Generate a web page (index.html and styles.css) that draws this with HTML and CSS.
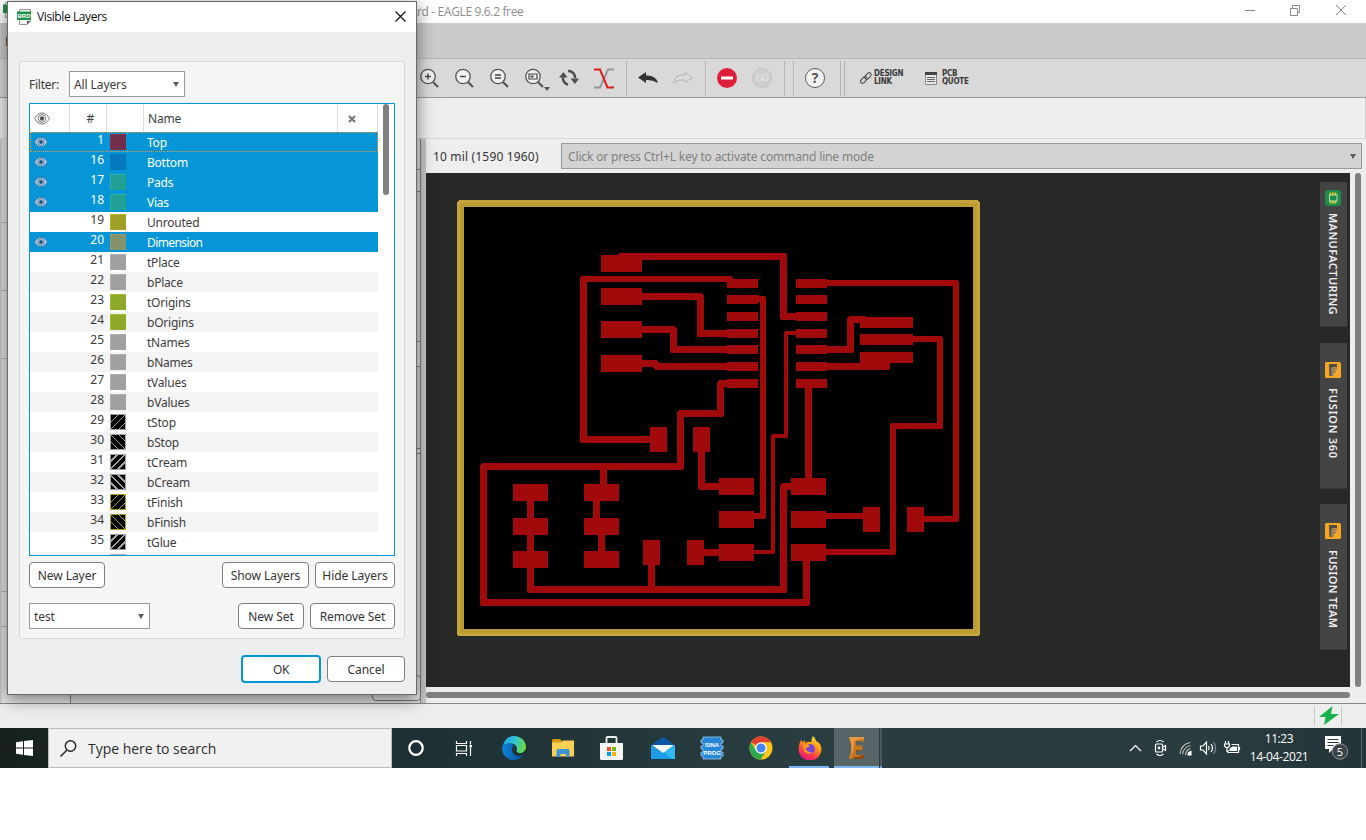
FILE: index.html
```html
<!DOCTYPE html>
<html lang="en">
<head>
<meta charset="utf-8">
<title>Visible Layers - EAGLE</title>
<link rel="stylesheet" href="styles.css">
</head>
<body>
<svg width="0" height="0" class="defs">
  <defs>
    <symbol id="eye" viewBox="0 0 16 13"><path d="M.6 6.500C2.500 2.800 5 1 8 1S13.500 2.800 15.400 6.500C13.500 10.200 11 12 8 12S2.500 10.200.6 6.500Z" fill="var(--eye-bg)" stroke="var(--eye-ln)" stroke-width="1"/><circle cx="8" cy="6.500" r="3.800" fill="none" stroke="var(--eye-ln)"/><circle cx="8" cy="6.500" r="2.200" fill="var(--eye-dot)"/></symbol>
    <symbol id="lens" viewBox="0 0 20 20"><path d="M14 14L19 19" stroke="#555" stroke-width="2.200"/><circle cx="9" cy="8.500" r="7.200" fill="#f0f0f0" stroke="#555" stroke-width="1.300"/></symbol>
    <symbol id="brd" viewBox="0 0 15 16"><path d="M2.500.500H13.500V12L10 15.500H2.500Z" fill="#f8f8f8" stroke="#999"/><path d="M10 15.500V12h3.500Z" fill="#555"/><path d="M0 2.500H14V11H0Z" fill="#1f9346"/></symbol>
    <symbol id="fus" viewBox="0 0 16 16"><rect width="16" height="16" rx="1.500" fill="#f5a623"/><path d="M4 2H12V5H7.500V14H4.500Z" fill="#4d4a48"/><path d="M7 5.500H12V7.500H8.500V8.500H11V10.500H8.500V14H6V6Z" fill="#8f7d68"/></symbol>
  </defs>
</svg>
<div class="app">
  <header class="titlebar">
    <svg class="app-ico" width="15" height="16"><use href="#brd"/></svg>
    <span class="app-title">rd - EAGLE 9.6.2 free</span>
    <svg class="win-btns" width="116" height="23" fill="none" stroke="#888"><path d="M5 10.500H15M50.500 8.500h7v7h-7zM52.500 8V5.500h7v7H58M96 5l10 10M106 5L96 15"/></svg>
  </header>
  <div class="menubar"><span>F</span></div>
  <div class="toolbar">
    <span class="tool"><svg width="20" height="20"><use href="#lens"/><path d="M6 8.500h6M9 5.500v6" stroke="#444" stroke-width="1.400"/></svg></span>
    <span class="tool"><svg width="20" height="20"><use href="#lens"/><path d="M6 8.500h6" stroke="#444" stroke-width="1.400"/></svg></span>
    <span class="tool"><svg width="20" height="20"><use href="#lens"/><path d="M6 7h6M6 10h6" stroke="#444" stroke-width="1.300"/></svg></span>
    <span class="tool"><svg width="26" height="24" viewBox="0 -2 26 24"><use href="#lens" width="20" height="20"/><path d="M5 6h8v5H5z" fill="none" stroke="#444" stroke-width="1.200"/><path d="M6.500 7.500h3v2h-3z" fill="#444"/><path d="M20 19h6l-3 4z" fill="#555"/></svg></span>
    <span class="tool"><svg width="20" height="18" viewBox="0 0 20 18" fill="none" stroke="#4d4d4d" stroke-width="2.400"><path d="M9 15.500A6.500 6.500 0 0 1 4 8M9 2a6.500 6.500 0 0 1 7 7"/><path d="M0 8.500L4.500 3L8.500 8.500ZM11.500 9.500h8.500L16 15z" fill="#4d4d4d" stroke="none"/></svg></span>
    <span class="tool t-rats"><svg width="20" height="21" fill="none" stroke-width="2"><path d="M0 19.500h6l8-18h6" stroke="#999"/><path d="M0 1.500h6l7.500 18H20" stroke="#d8201c"/></svg></span>
    <i class="sep s1"></i>
    <span class="tool t-undo"><svg width="20" height="14"><path d="M0 6.500L8 1v3.500Q18 4 20 12Q14 8.500 8 9v3Z" fill="#333"/></svg></span>
    <span class="tool t-redo"><svg width="20" height="14"><path d="M19.500 6.500L12 1.500v2.500Q2 3.500.5 11.500Q6 8 12 9v2.500Z" fill="#dcdcdc" stroke="#b4b4b4"/></svg></span>
    <i class="sep s2"></i>
    <span class="tool t-stop"><svg width="20" height="20"><circle cx="10" cy="10" r="10" fill="#de1f3c"/><path d="M4 8.500h12v3H4z" fill="#fff"/></svg></span>
    <span class="tool t-go"><b>GO</b></span>
    <i class="sep s3"></i><i class="sep s4"></i>
    <span class="tool t-help"><b>?</b></span>
    <i class="sep s5"></i><i class="sep s6"></i>
    <span class="tool t-link"><svg width="12" height="12" fill="none" stroke="#555" stroke-width="1.200"><rect x="4.200" y="2" width="7.500" height="4" rx="2" transform="rotate(-48 8 4)"/><rect x="0" y="6" width="7.500" height="4" rx="2" transform="rotate(-48 3.800 8)"/></svg><em>DESIGN<br>LINK</em></span>
    <span class="tool t-quote"><svg width="12" height="13"><path d="M.5.500h11v12H.5z" fill="#e8e8e8" stroke="#888"/><path d="M0 0h12v3H0z" fill="#444"/><path d="M2 5.500h8M2 7.500h8M2 9.500h8" stroke="#666"/></svg><em>PCB<br>QUOTE</em></span>
  </div>
  <div class="subbar"></div>
  <main class="work">
    <aside class="side">
      <div class="gutter"><i class="g1"></i><i class="g2"></i><i class="g3"></i><i class="g4"></i><i class="g5"></i></div>
      <div class="stack"><div class="k1"></div><div class="k2"></div><div class="k3"></div><div class="k4"></div><div class="k5"></div><div class="k6"></div><span class="hidden-btn"></span></div>
      <div class="splitter"></div>
    </aside>
    <section class="editor">
      <div class="cmdrow"><span class="coords">10 mil (1590 1960)</span><div class="cmd"><span>Click or press Ctrl+L key to activate command line mode</span><i class="arr"></i></div></div>
      <div class="canvas-row">
        <div class="canvas">
          <svg class="board" width="894" height="514" viewBox="426 173 894 514" shape-rendering="crispEdges">
            <rect x="460.500" y="203.500" width="516" height="429" fill="#000" stroke="#c6a43c" stroke-width="7" stroke-linejoin="round"/>
            <rect x="462" y="205" width="513" height="426" fill="none" stroke="#bd9b34" stroke-width="4"/>
            <g fill="none" stroke="#a00a0a" stroke-width="7" stroke-linejoin="round" stroke-linecap="round">
              <path d="M621.500 256.500H783.500V316.500H800M583.500 279V439.500H655M640 296.500H700.500V333.500H730M640 329.500H673.500V349.500H730M640 363.500H655L657 366.500H730M730 383.500H720.500V413.500H680.500V466.500H483.500V602.500H806.500V555M820 349.500H850.500V319.500H864M820 366.500H886.500V360M808.500 385V480M701.500 450V486.500H722M530.500 490V589.500H783.500V486.500H795M603.500 466.500V490M597.500 487.500H600M596.500 495V522M601.500 530V555M651.500 560V589.500M700 552.500H722"/>
              <path stroke-width="6" d="M583 279H730M755 299H763V516H750M822 283H956V519H920M910 339H940V426H893V552H822M822 516H867"/>
              <path stroke-width="4" d="M800 333H786V436H773V552H750"/>
            </g>
            <path fill="#a00a0a" d="M601 255h41v17h-41zM601 288h41v17h-41zM601 321h41v17h-41zM601 355h41v17h-41z
              M727 279h31v9h-31zM727 295h31v9h-31zM727 312h31v9h-31zM727 329h31v9h-31zM727 345h31v9h-31zM727 362h31v9h-31zM727 379h31v9h-31z
              M796 279h31v9h-31zM796 295h31v9h-31zM796 312h31v9h-31zM796 329h31v9h-31zM796 345h31v9h-31zM796 362h31v9h-31zM796 379h31v9h-31z
              M860 317h53v11h-53zM860 334h53v11h-53zM860 352h53v11h-53z
              M650 427h17v25h-17zM693 427h17v25h-17zM643 540h17v25h-17zM687 540h17v25h-17zM863 507h17v25h-17zM907 507h17v25h-17z
              M719 478h35v17h-35zM719 511h35v17h-35zM719 544h35v17h-35zM791 478h35v17h-35zM791 511h35v17h-35zM791 544h35v17h-35z
              M513 484h35v17h-35zM513 518h35v17h-35zM513 551h35v17h-35zM584 484h35v17h-35zM584 518h35v17h-35zM584 551h35v17h-35z"/>
          </svg>
          <div class="tabs">
            <div class="vtab v1"><svg width="16" height="16"><rect width="16" height="16" rx="2" fill="#1f8a4b"/><path d="M5.500 2.500v11M8 2.500v11M10.500 2.500v11" stroke="#f2d422" stroke-width="1.600"/><rect x="4.500" y="5" width="7.500" height="6" fill="#1f8a4b" stroke="#b9e3a5"/></svg><span>MANUFACTURING</span></div>
            <div class="vtab v2"><svg width="16" height="16"><use href="#fus"/></svg><span>FUSION 360</span></div>
            <div class="vtab v3"><svg width="16" height="16"><use href="#fus"/></svg><span>FUSION TEAM</span></div>
          </div>
        </div>
        <div class="vscroll"></div>
      </div>
      <div class="hscroll"></div>
    </section>
  </main>
  <div class="status"><svg width="20" height="19"><path d="M13.500 0L0 11h6.500L5 19L20 8H12Z" fill="#16b24b"/></svg></div>

  <div class="dialog">
    <div class="dtitle"><svg width="15" height="16"><use href="#brd"/><text x="7" y="9" text-anchor="middle" class="brd-t">BRD</text></svg><span>Visible Layers</span><svg width="11" height="11" class="dx"><path d="M.5.500l10 10M10.500.500l-10 10" stroke="#111" stroke-width="1.200"/></svg></div>
    <div class="group">
      <div class="filter"><label>Filter:</label><div class="combo c1"><span>All Layers</span><i class="arr"></i></div></div>
      <div class="list">
        <div class="lbody">
          <div class="lhead"><span class="h1"><svg width="16" height="13" class="eye dark"><use href="#eye"/></svg></span><span class="h2">#</span><span class="h3"></span><span class="h4">Name</span><span class="h5"><svg width="8" height="8"><path d="M1 1l6 6M7 1L1 7" stroke="#777" stroke-width="2.200"/></svg></span></div>
          <div class="row sel foc"><svg class="eye" width="14" height="12"><use href="#eye"/></svg><b>1</b><i class="sw" style="--f:#722f49;--e:#8a3048"></i><span>Top</span></div>
          <div class="row sel"><svg class="eye" width="14" height="12"><use href="#eye"/></svg><b>16</b><i class="sw" style="--f:#0479bd;--e:#0479bd"></i><span>Bottom</span></div>
          <div class="row sel"><svg class="eye" width="14" height="12"><use href="#eye"/></svg><b>17</b><i class="sw" style="--f:#23a096;--e:#2eb3a0"></i><span>Pads</span></div>
          <div class="row sel"><svg class="eye" width="14" height="12"><use href="#eye"/></svg><b>18</b><i class="sw" style="--f:#23a096;--e:#2eb3a0"></i><span>Vias</span></div>
          <div class="row"><b>19</b><i class="sw" style="--f:#a09f28;--e:#b6b52a"></i><span>Unrouted</span></div>
          <div class="row sel"><svg class="eye" width="14" height="12"><use href="#eye"/></svg><b>20</b><i class="sw" style="--f:#84936d;--e:#a39a62"></i><span class="tight">Dimension</span></div>
          <div class="row"><b>21</b><i class="sw"></i><span>tPlace</span></div>
          <div class="row alt"><b>22</b><i class="sw"></i><span>bPlace</span></div>
          <div class="row"><b>23</b><i class="sw" style="--f:#8ea829;--e:#a0c02a"></i><span>tOrigins</span></div>
          <div class="row alt"><b>24</b><i class="sw" style="--f:#8ea829;--e:#a0c02a"></i><span>bOrigins</span></div>
          <div class="row"><b>25</b><i class="sw"></i><span>tNames</span></div>
          <div class="row alt"><b>26</b><i class="sw"></i><span>bNames</span></div>
          <div class="row"><b>27</b><i class="sw"></i><span>tValues</span></div>
          <div class="row alt"><b>28</b><i class="sw"></i><span>bValues</span></div>
          <div class="row"><b>29</b><i class="sw thin up"></i><span>tStop</span></div>
          <div class="row alt"><b>30</b><i class="sw thin dn"></i><span>bStop</span></div>
          <div class="row"><b>31</b><i class="sw thick up"></i><span>tCream</span></div>
          <div class="row alt"><b>32</b><i class="sw thick dn"></i><span>bCream</span></div>
          <div class="row"><b>33</b><i class="sw thin up olive"></i><span>tFinish</span></div>
          <div class="row alt"><b>34</b><i class="sw thin dn olive"></i><span>bFinish</span></div>
          <div class="row"><b>35</b><i class="sw thick up"></i><span>tGlue</span></div>
          <div class="row alt"><b></b><i class="sw"></i></div>
        </div>
        <div class="lscroll"></div>
      </div>
      <div class="btns b1"><button class="w76">New Layer</button><span class="grow"></span><button class="w87">Show Layers</button><button class="w80">Hide Layers</button></div>
      <div class="btns b2"><div class="combo c2"><span>test</span><i class="arr"></i></div><span class="grow"></span><button class="w66">New Set</button><button class="w85">Remove Set</button></div>
    </div>
    <div class="okrow"><button class="ok">OK</button><button class="cancel">Cancel</button></div>
  </div>
</div>

<footer class="taskbar">
  <div class="start"><svg width="17" height="16"><path d="M0 2.300L7 1.300V7.500H0ZM8 1.100L17 0V7.500H8ZM0 8.500H7V14.700L0 13.700ZM8 8.500H17V16L8 14.900Z" fill="#fff"/></svg></div>
  <div class="search"><svg width="17" height="17" fill="none" stroke="#222" stroke-width="1.400"><circle cx="10.500" cy="6" r="5.200"/><path d="M7 10L.5 16.500"/></svg><span>Type here to search</span></div>
  <div class="apps">
    <span class="slot"><svg width="18" height="18"><ellipse cx="9" cy="9" rx="6.700" ry="6.900" fill="none" stroke="#fff" stroke-width="2.200"/></svg></span>
    <span class="slot w47"><svg width="18" height="18" fill="none" stroke="#fff" stroke-width="1.200"><path d="M1.500 2v2.500h10V2M1.500 17v-2.500h10V17M1.500 6.500h10v5.500h-10zM15.500 2v3.500M15.500 9v8"/><path d="M14.500 6h2.500v2.500h-2.500z" fill="#fff" stroke="none"/></svg></span>
    <span class="slot w54"><svg width="24" height="24" viewBox="0 0 24 24"><defs><linearGradient id="eg1" x1="0" x2="1" y1=".3" y2=".5"><stop offset="0" stop-color="#1ba7e8"/><stop offset=".5" stop-color="#33c3d0"/><stop offset="1" stop-color="#6bdd3c"/></linearGradient><linearGradient id="eg2" x1="0" x2="1"><stop offset="0" stop-color="#0b84d8"/><stop offset="1" stop-color="#0a4f9c"/></linearGradient></defs><path d="M1 10C2 3 7 0 12 0C19 0 24 5 24 11C24 15 20 17.500 17 17C13.500 16.500 15 14.500 15 12.500C15 9 11 7 7 7.500C4 8 2 9 1 10Z" fill="url(#eg1)"/><path d="M0 12C1 8.500 4 7.500 7 7.500C9.500 7.500 11 8.500 11.500 10C8.500 12.500 9.500 19 16 20C18.500 20.300 20.500 19.500 21.500 18.800C19 22.500 15.500 24 12 24C5 24 0 18.500 0 12Z" fill="url(#eg2)"/></svg></span>
    <span class="slot w44"><svg width="22" height="19"><path d="M0 1.500Q0 0 1.500 0H8l2 2v3H0Z" fill="#dd9a0c"/><path d="M0 3.500H9.500L11 1.500H22V17.500H0Z" fill="#fbce54"/><path d="M4.500 18V11.500Q4.500 10 6 10H16q1.500 0 1.500 1.500V18H14v-3H8.500v3Z" fill="#3d93d8"/></svg></span>
    <span class="slot w51"><svg width="23" height="24"><path d="M6.500 8V2Q6.500 1 7.500 1h8q1 0 1 1v6" fill="none" stroke="#eee" stroke-width="1.800"/><path d="M0 7H23V22.500Q23 24 21.500 24H1.500Q0 24 0 22.500Z" fill="#f4f4f4"/><path d="M7 11h4v4H7z" fill="#f04e23"/><path d="M12 11h4v4h-4z" fill="#7db700"/><path d="M7 16h4v4H7z" fill="#00a1f1"/><path d="M12 16h4v4h-4z" fill="#fdb800"/></svg></span>
    <span class="slot"><svg width="24" height="22"><path d="M0 8L12 0L24 8V12H0Z" fill="#0a58a8"/><path d="M0 8l11.500 7.500L24 8V22H0Z" fill="#1c9be6"/><path d="M13 15L24 8V22H21Z" fill="#32b8f0"/><path d="M1 8h22L12 16Z" fill="#f5f8fa"/></svg></span>
    <span class="slot"><svg width="24" height="24"><path d="M3 1H21V4h2v3h-2v3h2v3h-2v3h2v4h-2v3H3v-3H1v-4h2v-3H1v-3h2V7H1V4h2Z" fill="#2587d8" stroke="#9ecff2" stroke-width=".8"/><text x="12" y="11" class="sina">SINA</text><text x="12" y="18.500" class="sina">PROG</text></svg></span>
    <span class="slot"><svg width="24" height="24" viewBox="0 0 24 24"><circle cx="12" cy="12" r="11.500" fill="#fbc618"/><path d="M12 12L2 6.300A11.500 11.500 0 0 1 22 6.300H12Z" fill="#e2402f"/><path d="M2 6.300A11.500 11.500 0 0 0 11.500 23.500L17 14.800L7 14.800Z" fill="#2da94f"/><circle cx="12" cy="12" r="5.800" fill="#fff"/><circle cx="12" cy="12" r="4.500" fill="#4385f0"/></svg></span>
    <span class="slot run"><svg width="24" height="24" viewBox="0 0 24 24"><defs><linearGradient id="ff" x1=".8" y1="0" x2=".3" y2="1"><stop offset="0" stop-color="#ffe53b"/><stop offset=".4" stop-color="#ff980e"/><stop offset=".75" stop-color="#fb3650"/><stop offset="1" stop-color="#e31587"/></linearGradient></defs><path d="M15 0Q18 3 18 5Q23 7 23.500 13A11.500 11.500 0 0 1 .5 13Q.5 8 3 4L5 6L7 4V7Q10 5 13.500 6Q13 3 15 0Z" fill="url(#ff)"/><circle cx="12" cy="13" r="5" fill="#7a45d6"/><path d="M5 8Q9 7 12 10Q10 12 7.500 12Q9 17 15 16Q10 20 6 15Z" fill="#ff9a1a"/></svg></span>
    <span class="slot act"><svg width="16" height="24"><path d="M0 1H15V6Q11 4.500 7 5V9.500H13.500V14H7V19Q11 19.500 15 18V23H0Q2.500 18 2.500 12T0 1Z" fill="#c4771d"/><path d="M0 1H15V3Q8 3 5 6Q6 15 0 23Q2.500 18 2.500 12T0 1Z" fill="#e59a42"/><path d="M7 14H13.500L7 16ZM5 21Q11 21.500 15 18V23H3Z" fill="#8c4d12"/></svg></span>
    <i class="stackedge"></i>
  </div>
  <div class="tray">
    <svg width="115" height="20" fill="none" stroke="#fff" stroke-width="1.200"><path d="M2 13l5.500-5.500L13 13"/><path d="M28.500 4Q32 1 35.500 4M28.500 16Q32 19 35.500 16" /><rect x="27.500" y="6" width="7" height="8" rx="1"/><path d="M35 9l2.500-1.500v5L35 11" /><circle cx="31" cy="10" r=".8"/><path d="M52 16Q53 6 62.500 4.500M54.500 16.500Q55.500 9 62.500 7.500M57.500 17Q58 12 62.500 10.500" stroke="#bbb"/><path d="M60 17q0-3 3-3.500V17z" fill="#fff"/><path d="M72.500 8h2.500l3.500-4v12l-3.500-4h-2.500zM80.500 8q1.500 2 0 4M83 6q3 4 0 8"/><path d="M85.500 4q4 6 0 12" stroke="#889"/><path d="M103.500 6.500H110.500v8H100V12M111.500 9v3"/><path d="M104.500 8.500h4.500v4.500h-7.500V10.500z" fill="#fff" stroke="none"/><path d="M97.500 3v3M100.500 3v3M96.500 6h5v2l-1.500 1.500h-2L96.500 8zM99 9v5"/></svg>
    <div class="clock">11:23<br>14-04-2021</div>
    <svg class="note" width="26" height="24"><path d="M1 0H17V13H9L5 17V13H1Z" fill="#fff"/><path d="M3.500 3.500h11M3.500 6.500h11M3.500 9.500h6" stroke="#2b3d40"/><circle cx="16" cy="15.500" r="7.700" fill="#3a4447" stroke="#8c9698"/><text x="16" y="19.700" text-anchor="middle" class="n5">5</text></svg>
    <i class="peek"></i>
  </div>
</footer>
</body>
</html>
```

FILE: styles.css
```css
* { box-sizing: border-box; }
body { margin: 0; width: 1366px; height: 840px; overflow: hidden; background: #fff; font: 12px/16px "Noto Sans", sans-serif; color: #3c3c3c; }
.defs { position: absolute; }
.app { position: relative; height: 728px; overflow: hidden; background: #eee; display: flex; flex-direction: column; }

.titlebar { flex: none; height: 23px; background: #fff; display: flex; align-items: center; color: #8d8d8d; }
.app-ico { margin: -4px 0 0 3px; flex: none; }
.app-title { margin-left: 399px; padding-top: 1px; font-family: "Open Sans", sans-serif; letter-spacing: -.35px; white-space: nowrap; }
.win-btns { margin-left: auto; margin-right: 10px; }
.menubar { flex: none; height: 36px; background: #cbcbcb; border-bottom: 1px solid #b8b8b8; padding: 11px 0 0 5px; color: #7a2d20; }
.toolbar { flex: none; height: 39px; background: #d9d9d9; border-bottom: 1px solid #999; display: flex; align-items: center; padding-left: 419px; }
.tool { flex: none; width: 20px; height: 22px; display: flex; align-items: center; margin-right: 15px; overflow: visible; }
.tool svg { flex: none; overflow: visible; }
.t-rats { margin-right: 12px; }
.sep { flex: none; width: 1px; height: 35px; background: #b5b5b5; }
.s1 { margin-right: 11px; }
.t-redo { margin-right: 12px; }
.s2 { margin-right: 11px; }
.t-go { margin-right: 12px; }
.t-go b, .t-help b { width: 20px; height: 20px; border-radius: 50%; background: #cfcfcf; border: 1px solid #c4c4c4; color: #e2e2e2; font-size: 9.500px; line-height: 18px; text-align: center; letter-spacing: -.4px; font-weight: 500; }
.t-help b { background: #f2f2f2; border: 1.300px solid #5c5c5c; color: #555; font: 700 14px/18px "Noto Sans", sans-serif; }
.s3 { margin-right: 8px; }
.s4 { margin-right: 11px; }
.s5 { margin-right: 3px; }
.s6 { margin-right: 15px; }
.t-link { width: 64px; margin-right: 1px; }
.t-quote { width: 60px; }
.tool em { font: 700 8px/8px "DejaVu Sans Condensed", "DejaVu Sans", sans-serif; letter-spacing: -.25px; color: #3a3a3a; margin-left: 2px; padding-bottom: 1px; }
.t-quote em { margin-left: 5px; }
.subbar { flex: none; height: 41px; border-bottom: 1px solid #d6d6d6; border-right: 1px solid #d0d0d0; }

.work { flex: none; height: 565px; display: flex; border-bottom: 1px solid #868686; }
.side { width: 426px; display: flex; flex: none; }
.gutter { width: 70px; border-left: 2px solid #ccc; background: #e6e6e6; padding-top: 83px; }
.gutter i { display: block; height: 68px; border-top: 1px solid #b5b5b5; }
.gutter .g3 { height: 233px; }
.gutter .g4 { height: 35px; }
.stack { position: relative; width: 351px; border: solid #7d8288; border-width: 0 1px 0 1px; background: #dedede; }
.k1 { height: 30px; background: #e0e0e0; }
.k2 { height: 22px; border-top: 1px solid #7d8288; background: #ddd; }
.k3 { height: 150px; border-top: 1px solid #7d8288; background: #d4d4d4; }
.k4 { height: 26px; border: solid #7d8288; border-width: 1px 0; background: #ddd; }
.k5 { height: 81px; background: #d4d4d4; }
.k6 { height: 6px; border: solid #7d8288; border-width: 1px 0; }
.hidden-btn { position: absolute; left: 301px; bottom: 2px; width: 49px; height: 26px; border: 1px solid #777; border-radius: 4px; background: #e4e4e4; }
.splitter { width: 5px; background: #c6c6c6; }
.editor { flex: 1; display: flex; flex-direction: column; }
.cmdrow { height: 34px; flex: none; display: flex; align-items: center; padding: 0 4px 0 7px; }
.coords { width: 128px; color: #333; white-space: nowrap; letter-spacing: .17px; padding-top: 2px; }
.cmd { flex: 1; height: 26px; border: 1px solid #999; background: #d3d3d3; color: #808080; display: flex; align-items: center; justify-content: space-between; padding: 0 5px 0 6px; letter-spacing: -.15px; }
.cmd span, .combo span, .filter label { padding-top: 2px; }
.arr { border: solid transparent; border-width: 5px 3.500px 0; border-top-color: #5c5c5c; flex: none; }
.canvas-row { height: 514px; display: flex; flex: none; }
.canvas { width: 924px; background: #282828; display: flex; flex: none; }
.board { flex: none; }
.tabs { padding-top: 9px; }
.vtab { width: 27px; height: 145px; background: #444; border-bottom: 1px solid #383838; margin-bottom: 16px; display: flex; flex-direction: column; align-items: center; padding-right: 1px; }
.v1 { padding-top: 8px; }
.v2, .v3 { padding-top: 19px; height: 146px; margin-bottom: 15px; }
.vtab svg { flex: none; }
.vtab span { writing-mode: vertical-rl; font: 600 11px/14px "Noto Sans", sans-serif; color: #eee; white-space: nowrap; margin-top: 7px; letter-spacing: .4px; }
.v2 span { margin-top: 10px; letter-spacing: .75px; }
.v3 span { margin-top: 11px; letter-spacing: .35px; }
.vscroll { width: 6px; margin-left: 5px; background: #808080; border-radius: 3px; }
.hscroll { width: 924px; height: 6px; margin-top: 5px; background: #808080; border-radius: 3px; }
.status { height: 24px; padding: 2px 0 0 1314px; }
.status svg { display: block; box-sizing: content-box; padding: 0 2px 0 4px; border: solid #ccc; border-width: 0 1px; height: 20px; }

.dialog { position: absolute; left: 7px; top: 1px; width: 410px; height: 694px; background: #eee; border: 1px solid #6a6a6a; box-shadow: 0 4px 16px rgba(0,0,0,.5); display: flex; flex-direction: column; }
.dtitle { flex: none; height: 30px; background: #fff; display: flex; align-items: center; color: #111; padding: 0 10px 1px 9px; font-family: "Open Sans", sans-serif; }
.dtitle span { margin-left: 5px; letter-spacing: -.4px; padding-top: 1px; }
.dx { margin-left: auto; }
.brd-t { font: 700 6px "Liberation Sans", sans-serif; fill: #fff; }
.group { flex: none; margin: 29px 0 0 11px; width: 386px; height: 578px; border: 1px solid #d9d9d9; border-radius: 3px; background: #f5f5f5; padding: 9px; }
.filter { display: flex; align-items: center; height: 26px; }
.filter label { width: 40px; letter-spacing: -.25px; }
.combo { border: 1px solid #999; background: #fff; height: 26px; display: flex; align-items: center; justify-content: space-between; padding: 0 5px 0 4px; letter-spacing: -.1px; }
.c1 { width: 116px; }
.c2 { width: 121px; }
.list { margin-top: 6px; height: 453px; width: 366px; border: 1px solid #0696d7; background: #fff; display: flex; overflow: hidden; }
.lbody { width: 348px; flex: none; }
.lhead { height: 28px; display: flex; align-items: center; line-height: 30px; }
.lhead span { height: 28px; border-right: 1px solid #dedede; }
.h1 { width: 40px; padding: 8px 0 0 4px; line-height: 0; }
.h2 { width: 37px; text-align: center; padding-left: 5px; }
.h3 { width: 37px; }
.h4 { width: 194px; padding-left: 4px; letter-spacing: -.2px; }
.h5 { width: 40px; padding-left: 10px; }
.eye { --eye-bg: #b5d5ef; --eye-ln: #3f6f9b; --eye-dot: #2f5576; flex: none; }
.eye.dark { --eye-bg: #fff; --eye-ln: #777; --eye-dot: #555; }
.row { height: 20px; display: flex; position: relative; padding: 0 0 0 4px; }
.row .eye { margin: 4px -14px 0 0; }
.row b { width: 70px; text-align: right; font-weight: 400; line-height: 16px; }
.row span { line-height: 22px; margin-left: 21px; white-space: nowrap; letter-spacing: -.22px; }
.row .tight { letter-spacing: -.6px; }
.alt { background: #f4f4f4; }
.sel { background: #0696d7; color: #fff; }
.foc { outline: 1px dotted #e8963c; outline-offset: -1px; }
.sw { --f: #a0a0a0; --e: #b0b0b0; width: 16px; height: 16px; margin: 2px 0 0 6px; background: var(--f); border: solid var(--e); border-width: 1px 0 0 1px; }
.thin, .thick { --e: #a0a0a0; border-width: 1px; background: repeating-linear-gradient(var(--a), #000 0 4.300px, var(--e) 4.300px 5.300px); }
.thick { background: repeating-linear-gradient(var(--a), #000 0 3.200px, var(--e) 3.200px 5.300px); }
.up { --a: 135deg; }
.dn { --a: 45deg; }
.olive { --e: #a6a428; }
.lscroll { width: 6px; height: 91px; margin-left: 5px; background: #808080; border-radius: 3px; }
.btns { display: flex; gap: 6px; height: 26px; }
.b1 { margin-top: 6px; }
.b2 { margin-top: 15px; }
.grow { flex: 1; }
button { font: 12px/16px "Noto Sans", sans-serif; letter-spacing: -.05px; color: #333; background: #fff; border: 1px solid #7e7e7e; border-radius: 4px; padding: 2px 0 0; height: 26px; white-space: nowrap; }
.w76 { width: 76px; } .w87 { width: 87px; } .w80 { width: 80px; } .w66 { width: 66px; } .w85 { width: 85px; }
.okrow { display: flex; justify-content: flex-end; align-items: center; gap: 6px; padding-right: 11px; margin-top: 16px; height: 28px; }
.ok { width: 80px; height: 28px; border: 2px solid #0696d7; letter-spacing: -.4px; }
.cancel { width: 78px; }

.taskbar { height: 40px; display: flex; background: linear-gradient(90deg, #18211f 0, #1c2f33 400px, #2a3d40 800px, #2a3c3f 1200px, #233539 100%); color: #fff; font-family: "Open Sans", sans-serif; }
.start { width: 48px; display: flex; align-items: center; justify-content: center; }
.search { width: 344px; background: #f1f1f1; border: 1px solid #bcbcbc; display: flex; align-items: center; padding-left: 11px; color: #2d2d2d; font-size: 14px; }
.search span { margin-left: 11px; padding-top: 1px; letter-spacing: -.03px; white-space: nowrap; }
.apps { display: flex; flex: none; }
.slot { width: 49px; display: flex; align-items: center; justify-content: center; flex: none; }
.slot:first-child { width: 48px; }
.slot.w47 { width: 47px; }
.slot.w54 { width: 54px; }
.slot.w44 { width: 44px; }
.slot.w51 { width: 53px; }
.run { background: linear-gradient(#7db5f2, #7db5f2) 4px 100% / 40px 2px no-repeat; }
.act { width: 45px; background: linear-gradient(#7db5f2, #7db5f2) 0 100% / 100% 2px no-repeat, #586567; }
.stackedge { width: 3px; border-left: 1px solid #2c393c; background: linear-gradient(#6f9fd3, #6f9fd3) 0 100% / 100% 2px no-repeat, #4a585b; }
.sina { font: 700 6px "Liberation Sans", sans-serif; fill: #fff; text-anchor: middle; }
.tray { margin-left: auto; display: flex; align-items: center; flex: none; }
.tray svg:first-child { margin-right: 2px; }
.clock { width: 68px; text-align: center; font-size: 12px; line-height: 18px; letter-spacing: -.4px; white-space: nowrap; }
.note { margin-left: 11px; }
.n5 { font: 11px "Open Sans", sans-serif; fill: #fff; }
.peek { width: 1px; height: 40px; background: #5d6b6e; margin: 0 4px 0 11px; }
```
